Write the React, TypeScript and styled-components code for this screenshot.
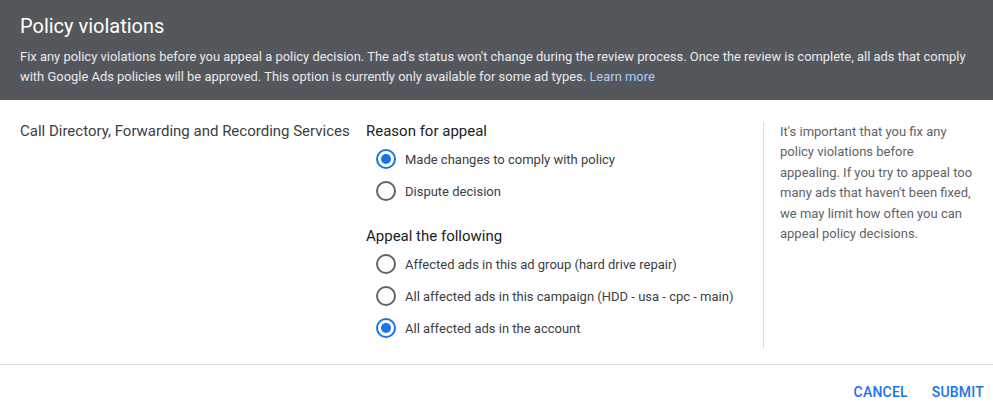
import React, { useState } from 'react';
import styled, { createGlobalStyle } from 'styled-components';

const GlobalStyle = createGlobalStyle`
  html, body {
    margin: 0;
    padding: 0;
    background: #fff;
    font-family: Roboto, "Liberation Sans", Arial, sans-serif;
  }
`;

const Dialog = styled.div`
  width: 993px;
  display: flex;
  flex-direction: column;
`;

const Header = styled.div`
  background: #54575b;
  padding: 14px 14px 13px 20px;
  height: 100px;
  box-sizing: border-box;
`;

const Title = styled.h1`
  margin: 0;
  font-size: 20px;
  font-weight: 400;
  line-height: 24px;
  color: #fff;
`;

const Intro = styled.p`
  margin: 9px 0 0;
  font-size: 12.95px;
  line-height: 20px;
  color: #e8eaed;
`;

const Link = styled.a`
  color: #aecbfa;
  text-decoration: none;
  cursor: pointer;
`;

const Body = styled.div`
  display: grid;
  grid-template-columns: 346px 397px 1fr;
  padding: 20px 20px 15px 20px;
  border-bottom: 1px solid #dadce0;
`;

const PolicyName = styled.div`
  font-size: 15px;
  line-height: 22px;
  color: #3c4043;
`;

const Options = styled.div`
  display: flex;
  flex-direction: column;
  padding-bottom: 5px;
`;

const GroupTitle = styled.div<{ $spaced?: boolean }>`
  font-size: 15px;
  line-height: 22px;
  color: #202124;
  margin-top: ${(p) => (p.$spaced ? '18px' : '0')};
  margin-bottom: 1px;
`;

const OptionRow = styled.label`
  display: flex;
  align-items: center;
  height: 32px;
  padding-left: 10px;
  gap: 9px;
  cursor: pointer;
  font-size: 13px;
  color: #3c4043;
`;

const HiddenInput = styled.input`
  position: absolute;
  opacity: 0;
  width: 0;
  height: 0;
`;

const RadioMark = styled.span<{ $checked: boolean }>`
  width: 20px;
  height: 20px;
  box-sizing: border-box;
  border-radius: 50%;
  border: 2px solid ${(p) => (p.$checked ? '#1a73e8' : '#5f6368')};
  display: flex;
  align-items: center;
  justify-content: center;
  flex-shrink: 0;

  &::after {
    content: '';
    width: 10px;
    height: 10px;
    border-radius: 50%;
    background: ${(p) => (p.$checked ? '#1a73e8' : 'transparent')};
  }
`;

const Aside = styled.div`
  border-left: 1px solid #dadce0;
  margin-top: 2px;
  padding-left: 16px;
  font-size: 13px;
  line-height: 20.4px;
  color: #5f6368;
`;

const Footer = styled.div`
  display: flex;
  justify-content: flex-end;
  gap: 8px;
  padding: 9px 1px 0 0;
`;

const TextButton = styled.button`
  background: none;
  border: none;
  height: 36px;
  padding: 0 8px;
  font-family: Roboto, "Liberation Sans", Arial, sans-serif;
  font-size: 14px;
  font-weight: 500;
  letter-spacing: 0.2px;
  color: #1a73e8;
  text-transform: uppercase;
  cursor: pointer;
`;

type Option = { id: string; label: string };

const reasons: Option[] = [
  { id: 'changes', label: 'Made changes to comply with policy' },
  { id: 'dispute', label: 'Dispute decision' },
];

const scopes: Option[] = [
  { id: 'adgroup', label: 'Affected ads in this ad group (hard drive repair)' },
  { id: 'campaign', label: 'All affected ads in this campaign (HDD - usa - cpc - main)' },
  { id: 'account', label: 'All affected ads in the account' },
];

function RadioGroup({
  name,
  options,
  value,
  onChange,
}: {
  name: string;
  options: Option[];
  value: string;
  onChange: (v: string) => void;
}) {
  return (
    <>
      {options.map((o) => (
        <OptionRow key={o.id}>
          <HiddenInput
            type="radio"
            name={name}
            checked={value === o.id}
            onChange={() => onChange(o.id)}
          />
          <RadioMark $checked={value === o.id} />
          {o.label}
        </OptionRow>
      ))}
    </>
  );
}

export default function App() {
  const [reason, setReason] = useState('changes');
  const [scope, setScope] = useState('account');

  return (
    <>
      <GlobalStyle />
      <Dialog>
        <Header>
          <Title>Policy violations</Title>
          <Intro>
            Fix any policy violations before you appeal a policy decision. The ad's status won't
            change during the review process. Once the review is complete, all ads that comply
            with Google Ads policies will be approved. This option is currently only available for
            some ad types. <Link>Learn more</Link>
          </Intro>
        </Header>
        <Body>
          <PolicyName>Call Directory, Forwarding and Recording Services</PolicyName>
          <Options>
            <GroupTitle>Reason for appeal</GroupTitle>
            <RadioGroup name="reason" options={reasons} value={reason} onChange={setReason} />
            <GroupTitle $spaced>Appeal the following</GroupTitle>
            <RadioGroup name="scope" options={scopes} value={scope} onChange={setScope} />
          </Options>
          <Aside>
            It's important that you fix any policy violations before appealing. If you try to
            appeal too many ads that haven't been fixed, we may limit how often you can appeal
            policy decisions.
          </Aside>
        </Body>
        <Footer>
          <TextButton>Cancel</TextButton>
          <TextButton>Submit</TextButton>
        </Footer>
      </Dialog>
    </>
  );
}
